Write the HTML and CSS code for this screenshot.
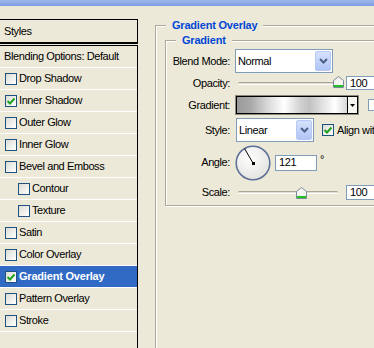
FILE: index.html
```html
<!DOCTYPE html>
<html lang="en">
<head>
	<meta charset="UTF-8">
	<meta name="viewport" content="width=device-width, initial-scale=1.0">
	<title>Layer Style</title>

	<link rel="stylesheet" href="styles.css">
</head>
<body>

	<div class="titlebar"></div>

	<div class="dialog">

		<div class="styles-panel">
			<div class="styles-head">Styles</div>
			<ul class="styles-list">
				<li class="styles-row">Blending Options: Default</li>
				<li class="styles-row"><span class="chk"></span>Drop Shadow</li>
				<li class="styles-row"><span class="chk chk--on"><svg width="10" height="10" viewBox="0 0 10 10"><path d="M1.5 5 L4 7.5 L8.5 2.5" fill="none" stroke="#21A121" stroke-width="2"/></svg></span>Inner Shadow</li>
				<li class="styles-row"><span class="chk"></span>Outer Glow</li>
				<li class="styles-row"><span class="chk"></span>Inner Glow</li>
				<li class="styles-row"><span class="chk"></span>Bevel and Emboss</li>
				<li class="styles-row styles-row--sub"><span class="chk"></span>Contour</li>
				<li class="styles-row styles-row--sub"><span class="chk"></span>Texture</li>
				<li class="styles-row"><span class="chk"></span>Satin</li>
				<li class="styles-row"><span class="chk"></span>Color Overlay</li>
				<li class="styles-row styles-row--active"><span class="chk chk--on"><svg width="10" height="10" viewBox="0 0 10 10"><path d="M1.5 5 L4 7.5 L8.5 2.5" fill="none" stroke="#21A121" stroke-width="2"/></svg></span>Gradient Overlay</li>
				<li class="styles-row"><span class="chk"></span>Pattern Overlay</li>
				<li class="styles-row"><span class="chk"></span>Stroke</li>
			</ul>
		</div>

		<div class="effect">
			<fieldset class="group group--outer">
				<legend>Gradient Overlay</legend>

				<fieldset class="group group--inner">
					<legend>Gradient</legend>

					<!-- blend mode -->
					<div class="field field--blend">
						<div class="field__label">Blend Mode:</div>
						<div class="combo combo--blend">
							<span>Normal</span>
							<span class="combo__btn"><svg width="9" height="6" viewBox="0 0 9 6"><path d="M1 1 L4.5 4.5 L8 1" fill="none" stroke="#4D6185" stroke-width="2"/></svg></span>
						</div>
					</div>

					<!-- opacity -->
					<div class="field field--opacity">
						<div class="field__label">Opacity:</div>
						<div class="slider">
							<div class="slider__track"></div>
							<svg class="slider__thumb" style="left: 95px" width="11" height="12" viewBox="0 0 11 12"><path d="M0.5 11.5 V4.5 L5.5 0.5 L10.5 4.5 V11.5 Z" fill="#F4F4F0" stroke="#7A8A99"/><path d="M1 10 H10" stroke="#21C121" stroke-width="2"/></svg>
						</div>
						<div class="num num--wide">100</div>
					</div>

					<!-- gradient -->
					<div class="field field--gradient">
						<div class="field__label">Gradient:</div>
						<div class="gradient">
							<div class="gradient__fill"></div>
							<div class="gradient__arrow"><svg width="5" height="3" viewBox="0 0 5 3"><path d="M0 0 H5 L2.5 3 Z" fill="#000"/></svg></div>
						</div>
						<span class="chk chk--reverse"></span>
					</div>

					<!-- style -->
					<div class="field field--style">
						<div class="field__label">Style:</div>
						<div class="combo combo--style">
							<span>Linear</span>
							<span class="combo__btn"><svg width="9" height="6" viewBox="0 0 9 6"><path d="M1 1 L4.5 4.5 L8 1" fill="none" stroke="#4D6185" stroke-width="2"/></svg></span>
						</div>
						<span class="chk chk--on chk--align"><svg width="10" height="10" viewBox="0 0 10 10"><path d="M1.5 5 L4 7.5 L8.5 2.5" fill="none" stroke="#21A121" stroke-width="2"/></svg></span>
						<span class="field__text">Align with Layer</span>
					</div>

					<!-- angle -->
					<div class="field field--angle">
						<div class="field__label">Angle:</div>
						<svg class="dial" width="36" height="36" viewBox="0 0 36 36">
							<defs>
								<radialGradient id="dialFill" cx="0.4" cy="0.35" r="0.7">
									<stop offset="0" stop-color="#FFFFFF"/>
									<stop offset="1" stop-color="#E2E2DE"/>
								</radialGradient>
							</defs>
							<circle cx="18" cy="18" r="16.8" fill="url(#dialFill)" stroke="#5A6E96" stroke-width="1.5"/>
							<path d="M18 18 L9.5 3.5" stroke="#000" stroke-width="1"/>
							<rect x="17" y="17" width="3" height="3" fill="#000"/>
						</svg>
						<div class="num num--angle">121</div>
						<span class="field__deg">°</span>
					</div>

					<!-- scale -->
					<div class="field field--scale">
						<div class="field__label">Scale:</div>
						<div class="slider">
							<div class="slider__track"></div>
							<svg class="slider__thumb" style="left: 58px" width="11" height="12" viewBox="0 0 11 12"><path d="M0.5 11.5 V4.5 L5.5 0.5 L10.5 4.5 V11.5 Z" fill="#F4F4F0" stroke="#7A8A99"/><path d="M1 10 H10" stroke="#21C121" stroke-width="2"/></svg>
						</div>
						<div class="num num--wide">100</div>
					</div>

				</fieldset>
			</fieldset>
		</div>

	</div>

</body>
</html>
```

FILE: styles.css
```css
* {
	box-sizing: border-box;
}

body {
	margin: 0;
	width: 374px;
	height: 348px;
	overflow: hidden;
	background: #ECE9D8;
	font-family: "Liberation Sans", Arial, sans-serif;
	font-size: 11px;
	line-height: 13px;
	letter-spacing: -0.4px;
	color: #000;
}

.titlebar {
	height: 6px;
	background: linear-gradient(#9DB8EC, #7C9CE1);
}

.dialog {
	display: flex;
	align-items: flex-start;
}

/* left list of styles */
.styles-panel {
	flex: none;
	width: 140px;
	margin-left: -2px;
	margin-top: 13px;
}

.styles-head {
	height: 25px;
	border: 1px solid #000;
	border-bottom-width: 2px;
	margin-bottom: 1px;
	padding-left: 5px;
	line-height: 22px;
}

.styles-list {
	list-style: none;
	margin: 0;
	padding: 0;
	height: 330px;
	border: 1px solid #000;
}

.styles-row {
	display: flex;
	align-items: center;
	height: 22px;
	padding-left: 5px;
	border-bottom: 1px solid #fff;
	white-space: nowrap;
}

.styles-row--sub .chk {
	margin-left: 14px;
}

.styles-row--active {
	background: #316AC5;
	color: #fff;
	font-weight: bold;
	letter-spacing: -0.2px;
}

.chk {
	flex: none;
	display: flex;
	align-items: center;
	justify-content: center;
	width: 12px;
	height: 12px;
	margin-left: 1px;
	margin-right: 2px;
	border: 1px solid #1C5180;
	background: linear-gradient(135deg, #DCDCD5, #FFFFFF);
}

/* right side: effect options */
.effect {
	flex: none;
	margin-left: 17px;
	margin-top: 13px;
}

.group {
	margin: 0;
	padding: 0;
	min-width: 0;
	border: 1px solid #ACA899;
	box-shadow: inset 1px 1px 0 #fff, 1px 1px 0 #fff;
}

.group legend {
	margin-left: 10px;
	padding: 0 6px;
	background: #ECE9D8;
	color: #0046D5;
	font-weight: bold;
	letter-spacing: -0.2px;
}

.group--outer {
	width: 240px;
	height: 340px;
}

.group--inner {
	width: 225px;
	margin: 2px 0 0 9px;
	padding-bottom: 5px;
}

.field {
	display: flex;
	align-items: center;
	white-space: nowrap;
}

.field__label {
	flex: none;
	width: 64px;
	margin-right: 5px;
	text-align: right;
}

.field__text {
	flex: none;
	margin-left: 3px;
}

.field--blend { height: 24px; margin-top: 2px; }
.field--opacity { height: 14px; margin-top: 3px; }
.field--gradient { height: 18px; margin-top: 6px; }
.field--style { height: 24px; margin-top: 4px; }
.field--angle { height: 37px; margin-top: 2px; }
.field--scale { height: 15px; margin-top: 4px; }

.combo {
	flex: none;
	display: flex;
	align-items: center;
	justify-content: space-between;
	height: 24px;
	padding: 1px 1px 1px 2px;
	border: 1px solid #7F9DB9;
	background: #fff;
}

.combo--blend {
	width: 98px;
}

.combo--style {
	width: 78px;
	margin-left: 1px;
}

.combo__btn {
	display: flex;
	align-items: center;
	justify-content: center;
	width: 16px;
	height: 100%;
	border: 1px solid #B6C9F5;
	border-radius: 2px;
	background: linear-gradient(#D6E1FC, #B0C5F6);
}

.slider {
	flex: none;
	position: relative;
	display: flex;
	align-items: center;
	width: 105px;
	height: 100%;
	margin-left: 3px;
}

.slider__track {
	width: 100px;
	height: 3px;
	border-radius: 2px;
	border-top: 1px solid #A8A69A;
	border-bottom: 1px solid #fff;
	background: #E0DED2;
}

.slider__thumb {
	position: absolute;
	top: 0;
}

.field--scale .slider__thumb {
	top: 2px;
}

.num {
	flex: none;
	display: flex;
	align-items: center;
	height: 100%;
	padding-left: 3px;
	border: 1px solid #7F9DB9;
	background: #fff;
}

.num--wide {
	width: 44px;
	margin-left: 3px;
}

.num--angle {
	width: 42px;
	height: 16px;
	margin-left: 4px;
}

.field__deg {
	align-self: flex-start;
	margin-top: 9px;
	margin-left: 3px;
}

.gradient {
	flex: none;
	display: flex;
	width: 122px;
	height: 18px;
	margin-left: 1px;
	border: 1px solid #000;
	box-shadow: 0 0 0 1px #8C8A80;
}

.gradient__fill {
	flex: 1;
	background: linear-gradient(90deg, #9A9A9A 0%, #A8A8A8 12%, #E4E4E4 32%, #FFFFFF 43%, #D0D0D0 58%, #C2C2C2 66%, #F2F2F2 84%, #FFFFFF 89%, #D8D8D8 100%);
}

.gradient__arrow {
	display: flex;
	align-items: center;
	justify-content: center;
	width: 10px;
	border-left: 1px solid #000;
	background: #F6F5F0;
}

.chk--reverse {
	margin-left: 10px;
	border-color: #7F9DB9;
	background: #fff;
}

.chk--align {
	margin-left: 8px;
	margin-right: 0;
}

.dial {
	flex: none;
}
```
